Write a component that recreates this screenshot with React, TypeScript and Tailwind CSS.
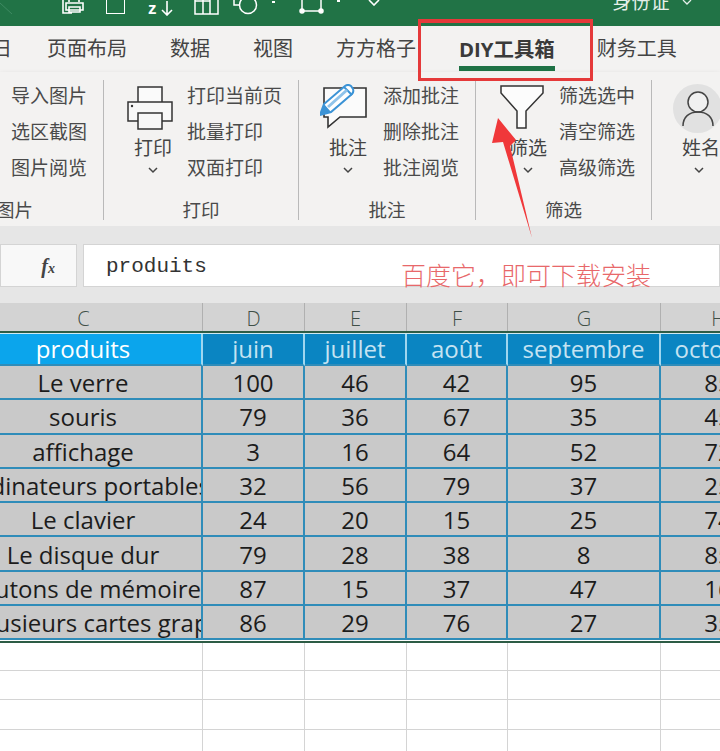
const months = ["juin", "juillet", "août", "septembre", "octobre"];

const rows = [
  { name: "Le verre", cells: [100, 46, 42, 95, 85], pad: "justify-center", nudge: "" },
  { name: "souris", cells: [79, 36, 67, 35, 45], pad: "justify-center", nudge: "" },
  { name: "affichage", cells: [3, 16, 64, 52, 72], pad: "justify-center", nudge: "" },
  { name: "Les ordinateurs portables", cells: [32, 56, 79, 37, 25], pad: "justify-end", nudge: "-mr-[9px]" },
  { name: "Le clavier", cells: [24, 20, 15, 25, 74], pad: "justify-center", nudge: "" },
  { name: "Le disque dur", cells: [79, 28, 38, 8, 85], pad: "justify-center", nudge: "" },
  { name: "Les boutons de mémoire", cells: [87, 15, 37, 47, 16], pad: "justify-end", nudge: "" },
  { name: "Plusieurs cartes graphiques", cells: [86, 29, 76, 27, 35], pad: "justify-start pl-[10px]", nudge: "" },
];

const columns = ["C", "D", "E", "F", "G", "H"];

function Chevron() {
  return (
    <svg width="12" height="8" viewBox="0 0 12 8" className="mx-auto" fill="none" stroke="#444" strokeWidth="1.5">
      <path d="M2 2l4 4 4-4" />
    </svg>
  );
}

function PrinterIcon() {
  return (
    <svg width="46" height="46" viewBox="0 0 46 46" className="-ml-[6px]" fill="none" stroke="#333" strokeWidth="1.5">
      <path d="M11 18V3h24v15" fill="#fafafa" />
      <path d="M1 18h44v19H1z" fill="#f7f7f7" />
      <path d="M11 29h24v16H11z" fill="#f7f7f7" />
      <circle cx="5" cy="22" r="1.2" fill="#333" stroke="none" />
    </svg>
  );
}

function CommentIcon() {
  return (
    <svg width="56" height="46" viewBox="0 0 56 46" fill="none">
      <path d="M4 4h42v29H20L8 43V33H4z" fill="#fbfbfb" stroke="#333" strokeWidth="1.6" />
      <path d="M0 31L4 20 25 2Q28 0 31 2L33 5Q34 8 32 10L11 28z" fill="#fff" stroke="#3b93d6" strokeWidth="2" />
      <path d="M0 31l4-11 7 8z" fill="#3b93d6" />
      <path d="M24 3l8 8" stroke="#3b93d6" strokeWidth="2" />
      <path d="M8 23L27 6" stroke="#8fc3ea" strokeWidth="3" />
    </svg>
  );
}

function FunnelIcon() {
  return (
    <svg width="44" height="46" viewBox="0 0 44 46" className="-ml-[12px]" fill="none">
      <path d="M1 2h42v7L26 27v17h-9V27L1 9z" fill="#fcfcfc" stroke="#333" strokeWidth="1.5" />
    </svg>
  );
}

function PersonIcon() {
  return (
    <div className="-ml-[3px] flex h-[49px] w-[49px] items-center justify-center rounded-full bg-[#e1e1e1]">
      <svg width="34" height="38" viewBox="0 0 34 38" fill="none" stroke="#444" strokeWidth="1.5">
        <circle cx="17" cy="12" r="10" fill="#f0f0f0" />
        <path d="M2 36c0-9 6-14 15-14s15 5 15 14" />
      </svg>
    </div>
  );
}

function BigButton({
  icon,
  label,
  className,
  labelClassName = "",
}: {
  icon: React.ReactNode;
  label: string;
  className: string;
  labelClassName?: string;
}) {
  return (
    <div className={`flex shrink-0 flex-col items-center ${className}`}>
      <div className="mt-[4px] flex h-[52px] items-start justify-center">{icon}</div>
      <div className={`h-[24px] whitespace-nowrap text-[19px] leading-[24px] text-[#444] ${labelClassName}`}>{label}</div>
      <div className="mt-[6px]">
        <Chevron />
      </div>
    </div>
  );
}

function ItemList({ items, className }: { items: string[]; className: string }) {
  return (
    <div className={`-mt-[2px] shrink-0 ${className}`}>
      {items.map((item) => (
        <div key={item} className="h-[36px] whitespace-nowrap text-[19px] leading-[36px] text-[#4a4a4a]">
          {item}
        </div>
      ))}
    </div>
  );
}

function TitleBar() {
  return (
    <div className="flex h-[26px] shrink-0 items-start overflow-hidden bg-[#217346] text-white">
      <svg width="13" height="15" viewBox="0 0 13 15" className="shrink-0" fill="none" stroke="#3f8a62" strokeWidth="1">
        <path d="M0 3l12 11" />
      </svg>
      <svg width="22" height="17" viewBox="0 0 22 17" className="ml-[49px] -mt-[3px] shrink-0" fill="none" stroke="#fff" strokeWidth="1.6">
        <path d="M1 2v14h9M7 5V1h10v4M4 6h17v7H4zM7 10h11v5H7z" />
      </svg>
      <div className="ml-[22px] h-[14px] w-[19px] shrink-0 border-x-[1.5px] border-b-[1.5px] border-white" />
      <div className="ml-[23px] flex h-[16px] shrink-0 items-end">
        <span className="font-['Liberation_Sans'] text-[17px] font-bold leading-[15px]">z</span>
        <svg width="14" height="15" viewBox="0 0 14 15" className="ml-[3px]" fill="none" stroke="#fff" strokeWidth="1.6">
          <path d="M7 0v14M2 9l5 5 5-5" />
        </svg>
      </div>
      <svg width="25" height="15" viewBox="0 0 25 15" className="ml-[20px] shrink-0" fill="none" stroke="#fff" strokeWidth="1.5">
        <path d="M1 0v14h23V0M9 0v14M16 0v14M1 1h15" />
      </svg>
      <svg width="26" height="15" viewBox="0 0 26 15" className="ml-[14px] shrink-0" fill="none" stroke="#fff" strokeWidth="1.5">
        <path d="M1 0v5h5" />
        <circle cx="15" cy="5" r="8.500" />
      </svg>
      <div className="ml-[13px] mt-[1px] h-[2px] w-[3px] shrink-0 bg-white" />
      <svg width="25" height="14" viewBox="0 0 25 14" className="ml-[24px] shrink-0" fill="none" stroke="#fff" strokeWidth="1.500">
        <path d="M3 0v11h19V0" />
        <circle cx="3" cy="11" r="2" fill="#fff" />
        <circle cx="22" cy="11" r="2" fill="#fff" />
      </svg>
      <div className="ml-[13px] h-[2px] w-[3px] shrink-0 bg-white" />
      <svg width="12" height="6" viewBox="0 0 12 6" className="ml-[28px] shrink-0" fill="none" stroke="#fff" strokeWidth="1.600">
        <path d="M1 0l5 5 5-5" />
      </svg>
      <div className="ml-[233px] -mt-[10px] shrink-0 whitespace-nowrap text-[19px] leading-[24px] text-[#e5efe9]">身份证</div>
      <svg width="10" height="6" viewBox="0 0 10 6" className="ml-[12px] shrink-0" fill="none" stroke="#e5efe9" strokeWidth="1.300">
        <path d="M1 0l4 4 4-4" />
      </svg>
    </div>
  );
}

function TabBar() {
  return (
    <div className="flex h-[46px] shrink-0 items-center overflow-hidden bg-[#f3f2f1] text-[20px] leading-[26px] text-[#444]">
      <span className="-ml-[8px] w-[20px] shrink-0">日</span>
      <span className="ml-[35px] shrink-0">页面布局</span>
      <span className="ml-[43px] shrink-0">数据</span>
      <span className="ml-[43px] shrink-0">视图</span>
      <span className="ml-[43px] shrink-0">方方格子</span>
      <span className="relative ml-[43px] shrink-0 whitespace-nowrap text-[20.400px] font-bold text-[#3a3a3a]">
        DIY工具箱
        <span className="absolute -bottom-[9px] left-0 h-[5px] w-full bg-[#1e7145]" />
      </span>
      <span className="ml-[42px] shrink-0">财务工具</span>
    </div>
  );
}

function Ribbon() {
  const divider = "h-[140px] shrink-0 border-r border-[#b9b9b9] flex flex-col justify-between";
  const groupLabel = "h-[24px] text-center text-[18.500px] leading-[24px] text-[#4a4a4a]";
  return (
    <div className="flex h-[154px] shrink-0 overflow-hidden bg-[#f3f2f1] pt-[8px] shadow-[0_3px_6px_rgba(0,0,0,0.18)]">
      <div className={`w-[104px] ${divider}`}>
        <ItemList items={["导入图片", "选区截图", "图片阅览"]} className="ml-[11px]" />
        <div className={`${groupLabel} -ml-[4px] -mb-[2px] text-left`}>图片</div>
      </div>
      <div className={`w-[195px] ${divider}`}>
        <div className="flex">
          <BigButton icon={<PrinterIcon />} label="打印" className="ml-[24px] w-[50px]" />
          <ItemList items={["打印当前页", "批量打印", "双面打印"]} className="ml-[9px]" />
        </div>
        <div className={`${groupLabel} -mb-[2px]`}>打印</div>
      </div>
      <div className={`w-[177px] ${divider}`}>
        <div className="flex">
          <BigButton icon={<CommentIcon />} label="批注" className="ml-[20px] w-[58px]" />
          <ItemList items={["添加批注", "删除批注", "批注阅览"]} className="ml-[6px]" />
        </div>
        <div className={`${groupLabel} -mb-[2px]`}>批注</div>
      </div>
      <div className={`w-[176px] ${divider}`}>
        <div className="flex">
          <BigButton icon={<FunnelIcon />} label="筛选" className="ml-[24px] w-[56px]" />
          <ItemList items={["筛选选中", "清空筛选", "高级筛选"]} className="ml-[3px]" />
        </div>
        <div className={`${groupLabel} -mb-[2px]`}>筛选</div>
      </div>
      <div className="shrink-0">
        <BigButton icon={<PersonIcon />} label="姓名" labelClassName="ml-[4px]" className="ml-[22px] w-[50px]" />
      </div>
    </div>
  );
}

function FormulaBar() {
  return (
    <div className="flex h-[77px] shrink-0 gap-[6px] bg-[#e6e6e6] pt-[18px]">
      <div className="flex h-[43px] w-[77px] shrink-0 items-center justify-end border border-[#d4d4d4] bg-[#f8f8f8] pr-[21px]">
        <span className="font-['Liberation_Serif'] text-[20px] font-bold italic leading-none text-[#444]">
          f<span className="text-[14px]">x</span>
        </span>
      </div>
      <div className="flex h-[43px] flex-1 items-center border border-[#d4d4d4] bg-white pl-[22px] pt-[2px] font-['Liberation_Mono'] text-[21px] text-[#333]">
        produits
      </div>
    </div>
  );
}

function Sheet() {
  const grid = "grid grid-cols-[238px_102px_102px_101px_153px_116px] w-[812px] -ml-[35px]";
  const cell = "flex items-center overflow-hidden whitespace-nowrap border-r-2 border-b-2 border-[#2f8cb9]";
  return (
    <div className="flex-1 overflow-hidden bg-white">
      <div className={`${grid} h-[28px] bg-[#d3d3d3]`}>
        {columns.map((col) => (
          <div key={col} className="flex items-center justify-center border-r border-[#b0b0b0] pt-[4px] text-[20px] font-light leading-[24px] text-[#3f4f47]">
            {col}
          </div>
        ))}
      </div>
      <div className="h-[2px] bg-[#2d5c45]" />
      <div className="h-[1px] bg-[#cfeaf2]" />
      <div className={`${grid} h-[32px] text-[24px]`}>
        <div className={`${cell} justify-center border-b-0 border-r-[#9fd6ef] bg-[#0ba5ec] text-white`}>produits</div>
        {months.map((month) => (
          <div key={month} className={`${cell} justify-center border-b-0 border-r-[#9fd6ef] bg-[#0a85c2] text-[#c5e3f2]`}>
            {month}
          </div>
        ))}
      </div>
      {rows.map((row) => (
        <div key={row.name} className={`${grid} h-[34.300px] text-[24px] text-[#1c1c1c]`}>
          <div className={`${cell} ${row.pad} bg-[#c9c9c9] pt-[2px]`}>
            <span className={`shrink-0 ${row.nudge}`}>{row.name}</span>
          </div>
          {row.cells.map((value, i) => (
            <div key={i} className={`${cell} justify-center bg-[#c9c9c9] pt-[2px]`}>
              {value}
            </div>
          ))}
        </div>
      ))}
      <div className="h-[1px] bg-white" />
      <div className="h-[2px] bg-[#2d5c45]" />
      {[0, 1, 2, 3].map((n) => (
        <div key={n} className={`${grid} ${n === 0 ? "h-[27.300px]" : "h-[29.700px]"}`}>
          {columns.map((col) => (
            <div key={col} className="border-r border-b border-[#d4d4d4]" />
          ))}
        </div>
      ))}
    </div>
  );
}

export default function App() {
  return (
    <div className="relative flex h-[751px] w-[720px] flex-col overflow-hidden bg-white font-['Open_Sans','Noto_Sans_CJK_SC',sans-serif]">
      <TitleBar />
      <TabBar />
      <Ribbon />
      <FormulaBar />
      <Sheet />

      {/* annotations pasted over the screenshot */}
      <div className="absolute left-[418px] top-[19px] h-[62px] w-[175px] border-[3px] border-t-4 border-[#e5393a]" />
      <svg className="absolute left-[488px] top-[114px]" width="50" height="128" viewBox="0 0 50 128">
        <path d="M10 4L28 26 22 32 44 124 15 28 4 29z" fill="#f0383a" />
      </svg>
      <div className="absolute left-[401px] top-[259px] whitespace-nowrap text-[25px] font-light leading-[32px] text-[#e8686a]">
        百度它，即可下载安装
      </div>
    </div>
  );
}
